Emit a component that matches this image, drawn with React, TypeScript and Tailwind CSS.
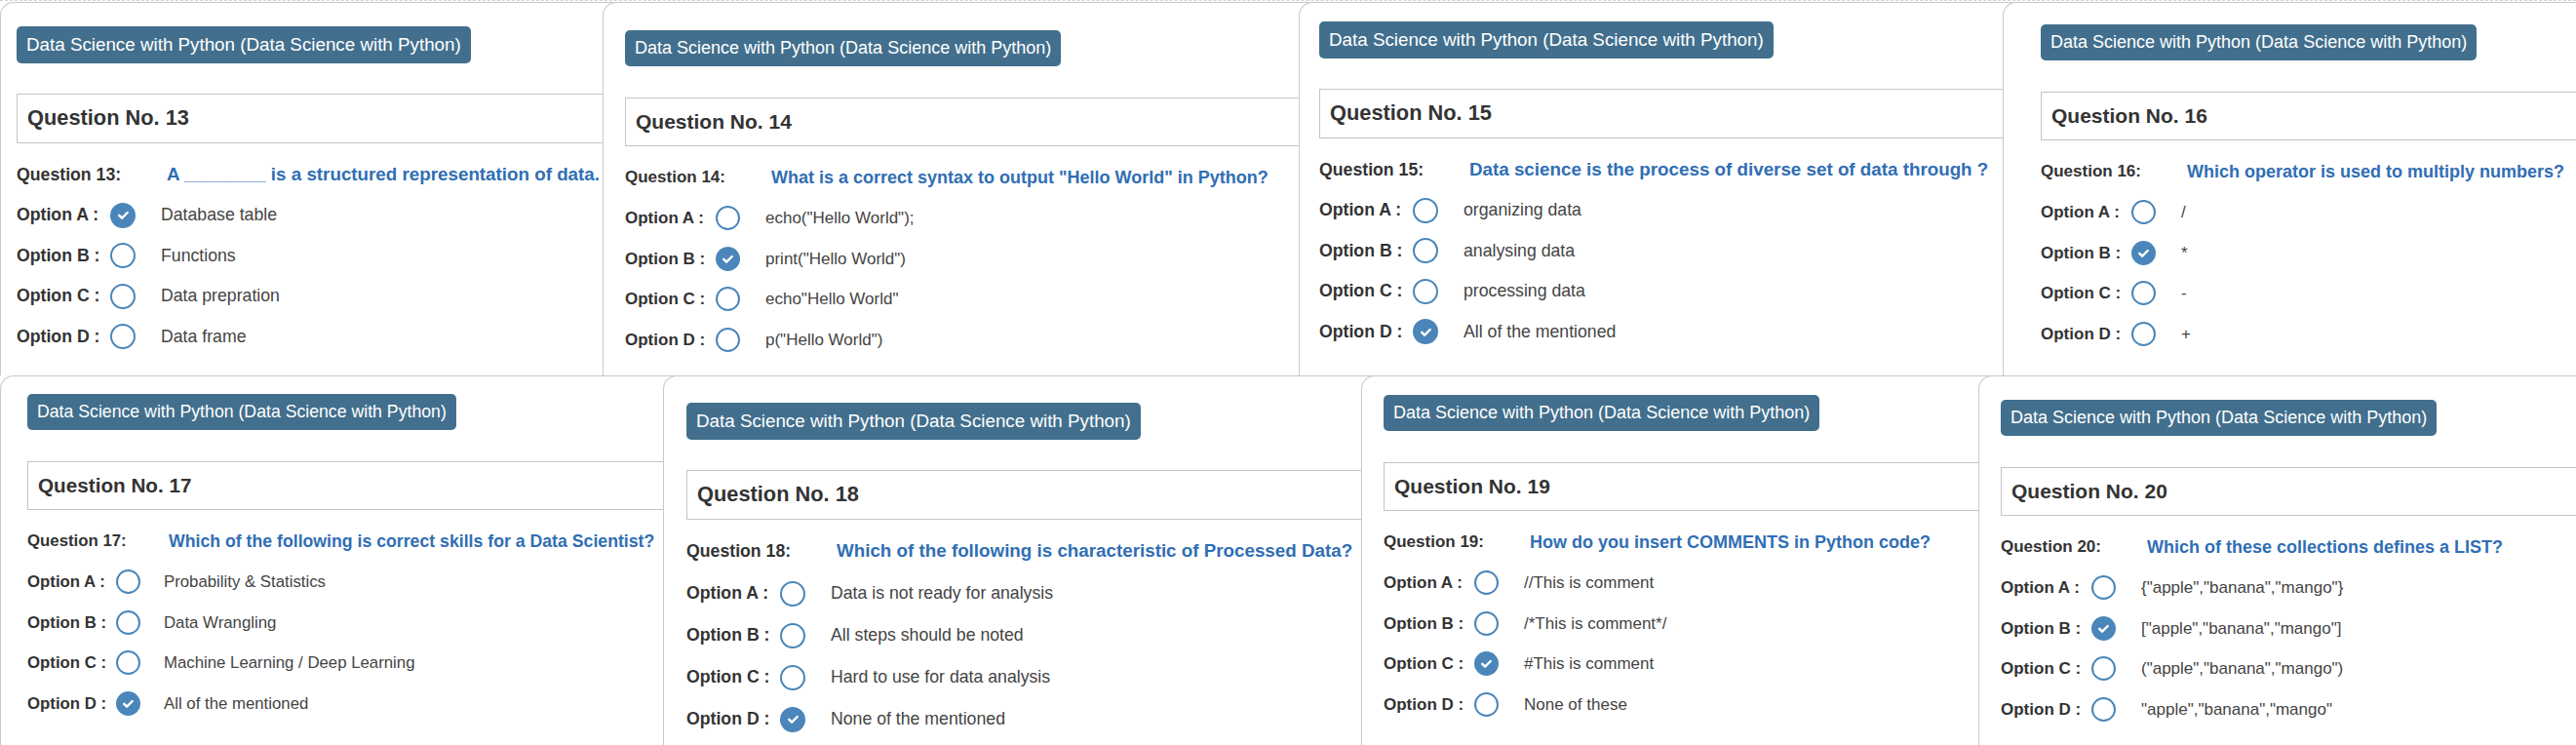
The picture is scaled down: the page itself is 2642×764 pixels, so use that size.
const course = "Data Science with Python (Data Science with Python)"

type Size = "sm" | "md" | "lg"

type Question = {
  no: number
  text: string
  options: string[]
  answer: number
  box: string
  pad: string
  size: Size
  tall?: boolean
}

// class sets for the slightly different zoom levels of each screenshot
const sizes = {
  sm: {
    badge: "text-[17.7px] h-[37px] leading-[37px]",
    head: "text-[20.7px] mt-[32px] h-[50px]",
    label: "text-[16.8px] w-[145px]",
    ask: "text-[17.7px]",
    optLabel: "text-[16.8px] w-[91px]",
    optText: "text-[16.8px] ml-[24px]",
    radio: "h-[25px] w-[25px]",
  },
  md: {
    badge: "text-[18px] h-[37px] leading-[37px]",
    head: "text-[21px] mt-[32px] h-[50px]",
    label: "text-[17px] w-[150px]",
    ask: "text-[18px]",
    optLabel: "text-[17px] w-[93px]",
    optText: "text-[17px] ml-[26px]",
    radio: "h-[25px] w-[25px]",
  },
  lg: {
    badge: "text-[18.8px] h-[38px] leading-[38px]",
    head: "text-[21.8px] mt-[31px] h-[51px]",
    label: "text-[17.7px] w-[154px]",
    ask: "text-[18.8px]",
    optLabel: "text-[17.7px] w-[96px]",
    optText: "text-[17.7px] ml-[26px]",
    radio: "h-[26px] w-[26px]",
  },
}

const rowOne: Question[] = [
  {
    no: 13,
    text: "A ________ is a structured representation of data.",
    options: ["Database table", "Functions", "Data prepration", "Data frame"],
    answer: 0,
    box: "w-[634px] shrink-0",
    pad: "pt-[24px] pl-[16px]",
    size: "lg",
  },
  {
    no: 14,
    text: 'What is a correct syntax to output "Hello World" in Python?',
    options: ['echo("Hello World");', 'print("Hello World")', 'echo"Hello World"', 'p("Hello World")'],
    answer: 1,
    box: "w-[730px] shrink-0 -ml-4",
    pad: "pt-[28px] pl-[22px]",
    size: "md",
  },
  {
    no: 15,
    text: "Data science is the process of diverse set of data through ?",
    options: ["organizing data", "analysing data", "processing data", "All of the mentioned"],
    answer: 3,
    box: "w-[738px] shrink-0 -ml-4",
    pad: "pt-[19px] pl-[20px]",
    size: "lg",
  },
  {
    no: 16,
    text: "Which operator is used to multiply numbers?",
    options: ["/", "*", "-", "+"],
    answer: 1,
    box: "flex-1 -ml-4",
    pad: "pt-[22px] pl-[38px]",
    size: "md",
  },
]

const rowTwo: Question[] = [
  {
    no: 17,
    text: "Which of the following is correct skills for a Data Scientist?",
    options: ["Probability & Statistics", "Data Wrangling", "Machine Learning / Deep Learning", "All of the mentioned"],
    answer: 3,
    box: "w-[696px] shrink-0",
    pad: "pt-[18px] pl-[27px]",
    size: "sm",
  },
  {
    no: 18,
    text: "Which of the following is characteristic of Processed Data?",
    options: ["Data is not ready for analysis", "All steps should be noted", "Hard to use for data analysis", "None of the mentioned"],
    answer: 3,
    box: "w-[732px] shrink-0 -ml-4",
    pad: "pt-[27px] pl-[23px]",
    size: "lg",
    tall: true,
  },
  {
    no: 19,
    text: "How do you insert COMMENTS in Python code?",
    options: ["//This is comment", "/*This is comment*/", "#This is comment", "None of these"],
    answer: 2,
    box: "w-[649px] shrink-0 -ml-4",
    pad: "pt-[19px] pl-[22px]",
    size: "md",
  },
  {
    no: 20,
    text: "Which of these collections defines a LIST?",
    options: [
      '{"apple","banana","mango"}',
      '["apple","banana","mango"]',
      '("apple","banana","mango")',
      '"apple","banana","mango"',
    ],
    answer: 1,
    box: "flex-1 -ml-4",
    pad: "pt-[24px] pl-[22px]",
    size: "md",
  },
]

const Radio = ({ checked, size }: { checked: boolean; size: string }) =>
  checked ? (
    <span className={`flex shrink-0 items-center justify-center rounded-full bg-[#4a86b9] ${size}`}>
      <svg viewBox="0 0 24 24" className="h-[17px] w-[17px]" fill="none">
        <path d="M6 12.5l4 4L18 8.5" stroke="white" strokeWidth="3.4" strokeLinecap="round" strokeLinejoin="round" />
      </svg>
    </span>
  ) : (
    <span className={`shrink-0 rounded-full border-2 border-[#4a86b9] ${size}`} />
  )

const QuestionCard = ({ q, height }: { q: Question; height: string }) => {
  const s = sizes[q.size]
  return (
    <div className={`relative overflow-hidden rounded-tl-[14px] border-l border-t border-[#c9c9c9] bg-white ${height} ${q.box} ${q.pad}`}>
      <div className={`inline-block rounded-[5px] bg-[#426f8d] px-[10px] whitespace-nowrap text-white ${s.badge}`}>
        {course}
      </div>

      <div className={`-mr-6 flex items-center border border-[#c4c4c4] pl-[10px] font-bold text-[#333] ${s.head}`}>
        Question No. {q.no}
      </div>

      <div className={`mt-[16px] flex items-center whitespace-nowrap ${q.tall ? "h-[33px]" : "h-[32px]"}`}>
        <span className={`shrink-0 font-bold text-[#333] ${s.label}`}>Question {q.no}:</span>
        <span className={`font-bold text-[#306eb4] ${s.ask}`}>{q.text}</span>
      </div>

      <div className="mt-[5px]">
        {q.options.map((opt, i) => (
          <div key={i} className={`flex items-center whitespace-nowrap ${q.tall ? "h-[43px]" : "h-[41.5px]"}`}>
            <span className={`shrink-0 font-bold text-[#333] ${s.optLabel}`}>Option {"ABCD"[i]} :</span>
            <Radio checked={i === q.answer} size={s.radio} />
            <span className={`text-[#444] ${s.optText}`}>{opt}</span>
          </div>
        ))}
      </div>
    </div>
  )
}

export default function App() {
  return (
    <div className="h-[764px] w-[2642px] overflow-hidden border-t border-dashed border-[#d2d2d2] bg-white pt-px font-['Liberation_Sans',Arial,sans-serif]">
      <div className="flex">
        {rowOne.map((q) => (
          <QuestionCard key={q.no} q={q} height="h-[383px]" />
        ))}
      </div>
      <div className="flex">
        {rowTwo.map((q) => (
          <QuestionCard key={q.no} q={q} height="h-[379px]" />
        ))}
      </div>
    </div>
  )
}
